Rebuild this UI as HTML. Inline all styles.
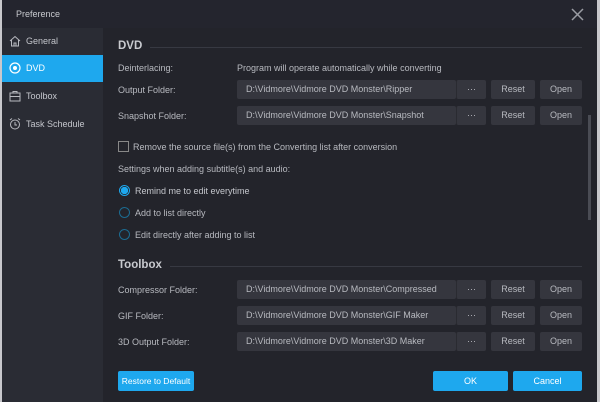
<!DOCTYPE html><html><head><style>
*{margin:0;padding:0;box-sizing:border-box}
body{width:600px;height:402px;background:#23242b;font-family:"Liberation Sans",sans-serif;color:#b8bac0;font-size:9px;overflow:hidden}
.a{position:absolute}
.title{left:0;top:0;width:600px;height:28px;background:#24252e}
.side{left:2px;top:28px;width:101px;height:374px;background:#2a2c34}
.item{position:absolute;left:0;width:101px;height:27px;line-height:27px;padding-left:24px;font-size:9px;color:#c4c6cc}
.item.act{background:#1ea8ee;color:#fff}
.ic{position:absolute;left:7px;top:7px;width:12px;height:12px}
.h{font-weight:bold;font-size:11.5px;color:#c8cacf}
.line{height:1px;background:#373942}
.f{background:#35363e;height:19px;line-height:19px;color:#b8bac0;padding-left:9px;border-radius:2px}
.b{background:#35363e;height:19px;line-height:19px;text-align:center;border-radius:2px}
.lbl{left:118px}
.radio{width:11px;height:11px;border-radius:50%;border:1.5px solid #1c6c92}
.blue{background:#1ea8ee;color:#fff;text-align:center;border-radius:2px}
</style></head><body>
<div class="a title"></div>
<div class="a" style="left:0;top:0;width:2px;height:402px;background:#c8c8cc"></div>
<div class="a" style="left:597px;top:0;width:3px;height:402px;background:#c8c8cc"></div>
<div class="a" style="left:16px;top:9px;color:#c8cacf">Preference</div>
<svg class="a" style="left:571px;top:8px" width="13" height="13"><path d="M1 1L12 12M12 1L1 12" stroke="#9a9ca3" stroke-width="1.5"/></svg>
<div class="a side">
<div class="item" style="top:0"><svg class="ic" viewBox="0 0 12 12"><path d="M1 6L6 1.5 11 6M2.5 5v6h7V5M5 11V8h2v3" fill="none" stroke="#b8bac0"/></svg>General</div>
<div class="item act" style="top:27px"><svg class="ic" viewBox="0 0 12 12"><circle cx="6" cy="6" r="5" fill="none" stroke="#fff" stroke-width="1.2"/><circle cx="6" cy="6" r="2" fill="#fff"/></svg>DVD</div>
<div class="item" style="top:55px"><svg class="ic" viewBox="0 0 12 12"><rect x="1" y="3" width="10" height="8" fill="none" stroke="#b8bac0"/><path d="M4 3V1.5h4V3M1 6.5h10" fill="none" stroke="#b8bac0"/></svg>Toolbox</div>
<div class="item" style="top:83px"><svg class="ic" viewBox="0 0 12 12"><circle cx="6" cy="6.5" r="4.5" fill="none" stroke="#b8bac0"/><path d="M6 4v3h2M1 2l2-1.5M11 2L9 .5" fill="none" stroke="#b8bac0"/></svg>Task Schedule</div>
</div>
<div class="a h" style="left:118px;top:40px">DVD</div>
<div class="a line" style="left:150px;top:47px;width:432px"></div>
<div class="a lbl" style="top:63px">Deinterlacing:</div>
<div class="a" style="left:237px;top:63px">Program will operate automatically while converting</div>

<div class="a lbl" style="top:85px">Output Folder:</div>
<div class="a f" style="left:237px;top:80px;width:219px">D:\Vidmore\Vidmore DVD Monster\Ripper</div>
<div class="a b" style="left:456px;top:80px;width:30px;border-left:1px solid #2a2b31">···</div>
<div class="a b" style="left:491px;top:80px;width:44px">Reset</div>
<div class="a b" style="left:540px;top:80px;width:42px">Open</div>

<div class="a lbl" style="top:111px">Snapshot Folder:</div>
<div class="a f" style="left:237px;top:106px;width:219px">D:\Vidmore\Vidmore DVD Monster\Snapshot</div>
<div class="a b" style="left:456px;top:106px;width:30px;border-left:1px solid #2a2b31">···</div>
<div class="a b" style="left:491px;top:106px;width:44px">Reset</div>
<div class="a b" style="left:540px;top:106px;width:42px">Open</div>

<div class="a" style="left:118px;top:141px;width:11px;height:11px;border:1px solid #888"></div>
<div class="a" style="left:133px;top:142px">Remove the source file(s) from the Converting list after conversion</div>
<div class="a lbl" style="top:164px">Settings when adding subtitle(s) and audio:</div>
<div class="a radio" style="left:119px;top:185px;border-color:#1ea8ee;background:radial-gradient(#1ea8ee 55%,transparent 60%)"></div>
<div class="a" style="left:135px;top:186px;color:#c4c6cc">Remind me to edit everytime</div>
<div class="a radio" style="left:119px;top:207px"></div>
<div class="a" style="left:135px;top:208px">Add to list directly</div>
<div class="a radio" style="left:119px;top:229px"></div>
<div class="a" style="left:135px;top:230px">Edit directly after adding to list</div>

<div class="a" style="left:588px;top:115px;width:3px;height:105px;background:#4a4c54"></div>

<div class="a h" style="left:118px;top:259px">Toolbox</div>
<div class="a line" style="left:170px;top:266px;width:412px"></div>
<div class="a lbl" style="top:285px">Compressor Folder:</div>
<div class="a f" style="left:237px;top:280px;width:219px">D:\Vidmore\Vidmore DVD Monster\Compressed</div>
<div class="a b" style="left:456px;top:280px;width:30px;border-left:1px solid #2a2b31">···</div>
<div class="a b" style="left:491px;top:280px;width:44px">Reset</div>
<div class="a b" style="left:540px;top:280px;width:42px">Open</div>
<div class="a lbl" style="top:311px">GIF Folder:</div>
<div class="a f" style="left:237px;top:306px;width:219px">D:\Vidmore\Vidmore DVD Monster\GIF Maker</div>
<div class="a b" style="left:456px;top:306px;width:30px;border-left:1px solid #2a2b31">···</div>
<div class="a b" style="left:491px;top:306px;width:44px">Reset</div>
<div class="a b" style="left:540px;top:306px;width:42px">Open</div>
<div class="a lbl" style="top:337px">3D Output Folder:</div>
<div class="a f" style="left:237px;top:332px;width:219px">D:\Vidmore\Vidmore DVD Monster\3D Maker</div>
<div class="a b" style="left:456px;top:332px;width:30px;border-left:1px solid #2a2b31">···</div>
<div class="a b" style="left:491px;top:332px;width:44px">Reset</div>
<div class="a b" style="left:540px;top:332px;width:42px">Open</div>

<div class="a blue" style="left:118px;top:371px;width:76px;height:20px;line-height:20px;font-size:8.5px">Restore to Default</div>
<div class="a blue" style="left:433px;top:371px;width:75px;height:20px;line-height:20px">OK</div>
<div class="a blue" style="left:513px;top:371px;width:69px;height:20px;line-height:20px">Cancel</div>
</body></html>
